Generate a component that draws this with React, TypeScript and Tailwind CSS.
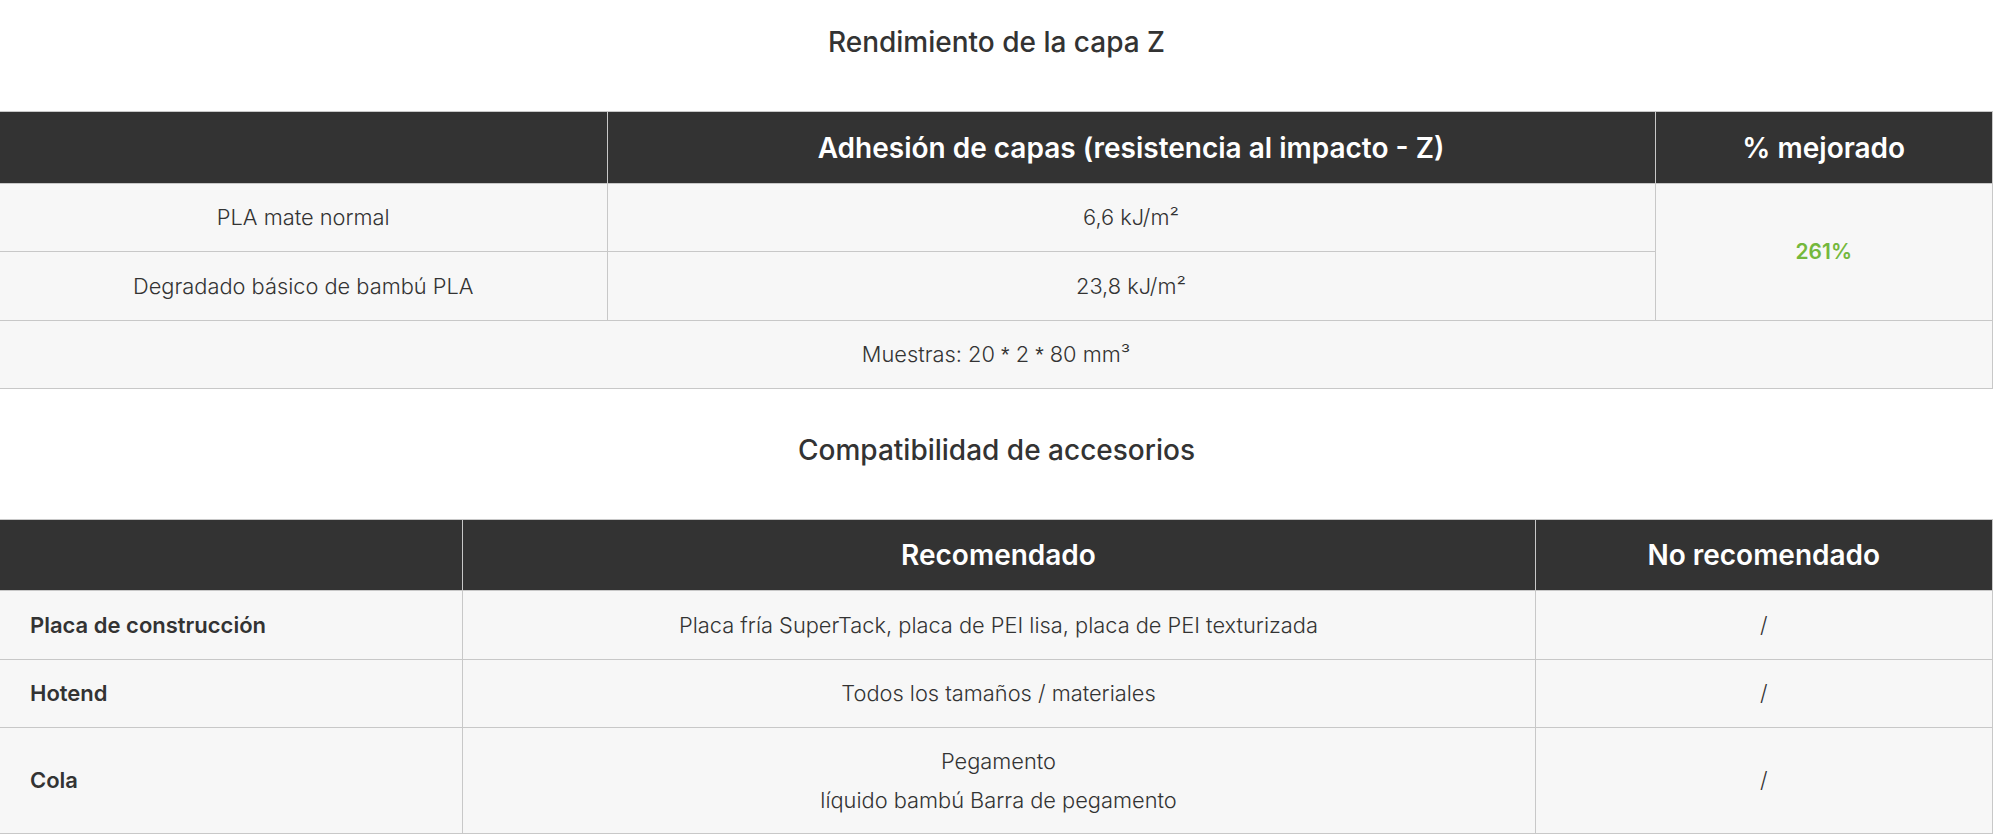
import React from "react";

const font = { fontFamily: "Inter, 'Noto Sans', sans-serif" };

const Ast = () => <span style={{ fontFamily: "'Liberation Sans', Arial, sans-serif" }}>*</span>;

export default function App() {
  return (
    <div className="w-[1993px] bg-white text-[#333333]" style={font}>
      <h2 className="pt-[24px] pb-[51px] text-center text-[28px] leading-[36px] font-medium text-[#333333]">
        Rendimiento de la capa Z
      </h2>
      <table className="w-full border-collapse table-fixed">
        <colgroup>
          <col className="w-[607px]" />
          <col className="w-[1048px]" />
          <col />
        </colgroup>
        <thead>
          <tr className="h-[72px] bg-[#333333] text-white">
            <th className="border border-[#c8c8c8] border-l-0"></th>
            <th className="border border-[#c8c8c8] text-[28px] font-semibold">
              Adhesión de capas (resistencia al impacto - Z)
            </th>
            <th className="border border-[#c8c8c8] text-[28px] font-semibold">
              % mejorado
            </th>
          </tr>
        </thead>
        <tbody className="bg-[#f7f7f7] text-[21.8px] font-light">
          <tr className="h-[68px]">
            <td className="border border-[#c8c8c8] border-l-0 text-center">PLA mate normal</td>
            <td className="border border-[#c8c8c8] text-center">6,6 kJ/m²</td>
            <td
              rowSpan={2}
              className="border border-[#c8c8c8] text-center text-[21px] font-semibold text-[#74b83c]"
            >
              261%
            </td>
          </tr>
          <tr className="h-[69px]">
            <td className="border border-[#c8c8c8] border-l-0 text-center">
              Degradado básico de bambú PLA
            </td>
            <td className="border border-[#c8c8c8] text-center">23,8 kJ/m²</td>
          </tr>
          <tr className="h-[68px]">
            <td colSpan={3} className="border border-[#c8c8c8] border-l-0 text-center">
              Muestras: 20 <Ast /> 2 <Ast /> 80 mm³
            </td>
          </tr>
        </tbody>
      </table>

      <h2 className="pt-[43px] pb-[51px] text-center text-[28px] leading-[36px] font-medium text-[#333333]">
        Compatibilidad de accesorios
      </h2>
      <table className="w-full border-collapse table-fixed">
        <colgroup>
          <col className="w-[462px]" />
          <col className="w-[1073px]" />
          <col />
        </colgroup>
        <thead>
          <tr className="h-[71px] bg-[#333333] text-white">
            <th className="border border-[#c8c8c8] border-l-0"></th>
            <th className="border border-[#c8c8c8] text-[28px] font-semibold">
              Recomendado
            </th>
            <th className="border border-[#c8c8c8] text-[28px] font-semibold">
              No recomendado
            </th>
          </tr>
        </thead>
        <tbody className="bg-[#f7f7f7] text-[21.8px] font-light">
          <tr className="h-[69px]">
            <td className="border border-[#c8c8c8] border-l-0 pl-[30px] text-[22px] font-semibold">
              Placa de construcción
            </td>
            <td className="border border-[#c8c8c8] text-center">
              Placa fría SuperTack, placa de PEI lisa, placa de PEI texturizada
            </td>
            <td className="border border-[#c8c8c8] text-center">/</td>
          </tr>
          <tr className="h-[68px]">
            <td className="border border-[#c8c8c8] border-l-0 pl-[30px] text-[22px] font-semibold">Hotend</td>
            <td className="border border-[#c8c8c8] text-center">Todos los tamaños / materiales</td>
            <td className="border border-[#c8c8c8] text-center">/</td>
          </tr>
          <tr className="h-[106px]">
            <td className="border border-[#c8c8c8] border-l-0 pl-[30px] text-[22px] font-semibold">Cola</td>
            <td className="border border-[#c8c8c8] text-center leading-[39px]">
              Pegamento
              <br />
              líquido bambú Barra de pegamento
            </td>
            <td className="border border-[#c8c8c8] text-center">/</td>
          </tr>
        </tbody>
      </table>
    </div>
  );
}
